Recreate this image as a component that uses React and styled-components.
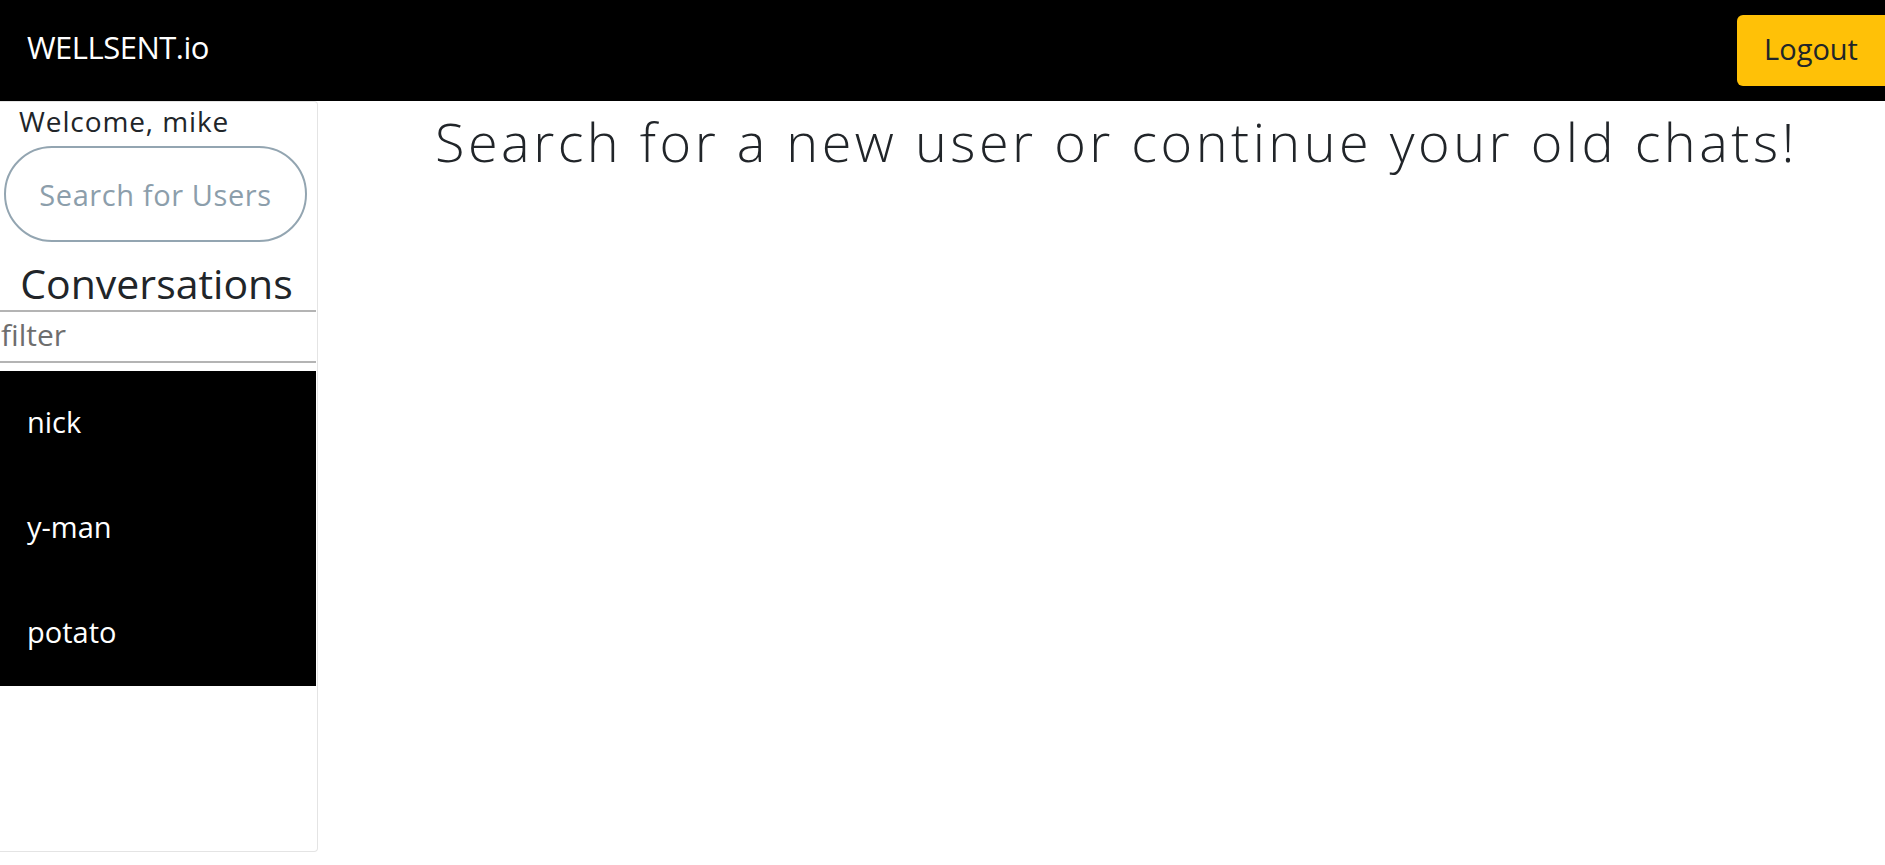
import React from 'react'
import styled, { createGlobalStyle } from 'styled-components'

const Global = createGlobalStyle`
  body {
    margin: 0;
    font-family: "Open Sans", "Noto Sans", sans-serif;
    color: #212529;
    background: #fff;
  }
  * { box-sizing: border-box; }
`

const Page = styled.div`
  display: flex;
  flex-direction: column;
  height: 100vh;
`

const Navbar = styled.header`
  display: flex;
  align-items: center;
  justify-content: space-between;
  height: 101px;
  background: #000;
  padding: 0 0 0 27px;
`

const Brand = styled.a`
  color: #fff;
  font-size: 31px;
  letter-spacing: -0.5px;
  text-decoration: none;
  margin-top: -8px;
`

const LogoutButton = styled.button`
  align-self: flex-start;
  margin-top: 15px;
  height: 71px;
  width: 148px;
  border: none;
  border-radius: 6px 0 0 6px;
  background: #ffc107;
  color: #212529;
  font-family: inherit;
  font-size: 29px;
  padding: 0 0 5px;
  cursor: pointer;
`

const Body = styled.div`
  display: flex;
  flex: 1;
`

const Sidebar = styled.aside`
  width: 318px;
  height: 751px;
  display: flex;
  flex-direction: column;
  border: 1px solid #e4e4e4;
  border-left: none;
  border-radius: 0 4px 4px 0;
`

const Welcome = styled.div`
  font-size: 28px;
  letter-spacing: 0.9px;
  padding: 1px 0 0 19px;
  line-height: 36px;
`

const SearchInput = styled.input`
  margin: 7px 10px 0 4px;
  height: 96px;
  border: 2px solid #93a5b1;
  border-radius: 48px;
  text-align: center;
  font-family: inherit;
  font-size: 29px;
  letter-spacing: 0.6px;
  outline: none;
  &::placeholder { color: #8c9eab; }
`

const SectionTitle = styled.h2`
  margin: 14px 0 0;
  font-weight: 400;
  font-size: 41px;
  text-align: center;
  line-height: 54px;
  padding-right: 4px;
`

const FilterInput = styled.input`
  width: 316px;
  height: 53px;
  border: none;
  border-top: 2px solid #b4b4b4;
  border-bottom: 2px solid #b4b4b4;
  padding: 0 0 4px 1px;
  font-family: inherit;
  font-size: 30px;
  outline: none;
  &::placeholder { color: #6e6e6e; }
`

const ConvoList = styled.ul`
  list-style: none;
  margin: 8px 0 0;
  padding: 0;
  width: 316px;
  background: #000;
`

const ConvoItem = styled.li`
  height: 105px;
  display: flex;
  align-items: center;
  padding-left: 27px;
  color: #fff;
  font-size: 29px;
  padding-bottom: 4px;
`

const Main = styled.main`
  flex: 1;
  display: flex;
  justify-content: center;
`

const Heading = styled.h1`
  margin: 4px 0 0 30px;
  font-size: 54px;
  font-weight: 300;
  letter-spacing: 3.5px;
  line-height: 72px;
  color: #212529;
`

const conversations = ['nick', 'y-man', 'potato']

export default function App() {
  return (
    <Page>
      <Global />
      <Navbar>
        <Brand href="#">WELLSENT.io</Brand>
        <LogoutButton>Logout</LogoutButton>
      </Navbar>
      <Body>
        <Sidebar>
          <Welcome>Welcome, mike</Welcome>
          <SearchInput placeholder="Search for Users" />
          <SectionTitle>Conversations</SectionTitle>
          <FilterInput placeholder="filter" />
          <ConvoList>
            {conversations.map(name => (
              <ConvoItem key={name}>{name}</ConvoItem>
            ))}
          </ConvoList>
        </Sidebar>
        <Main>
          <Heading>Search for a new user or continue your old chats!</Heading>
        </Main>
      </Body>
    </Page>
  )
}
